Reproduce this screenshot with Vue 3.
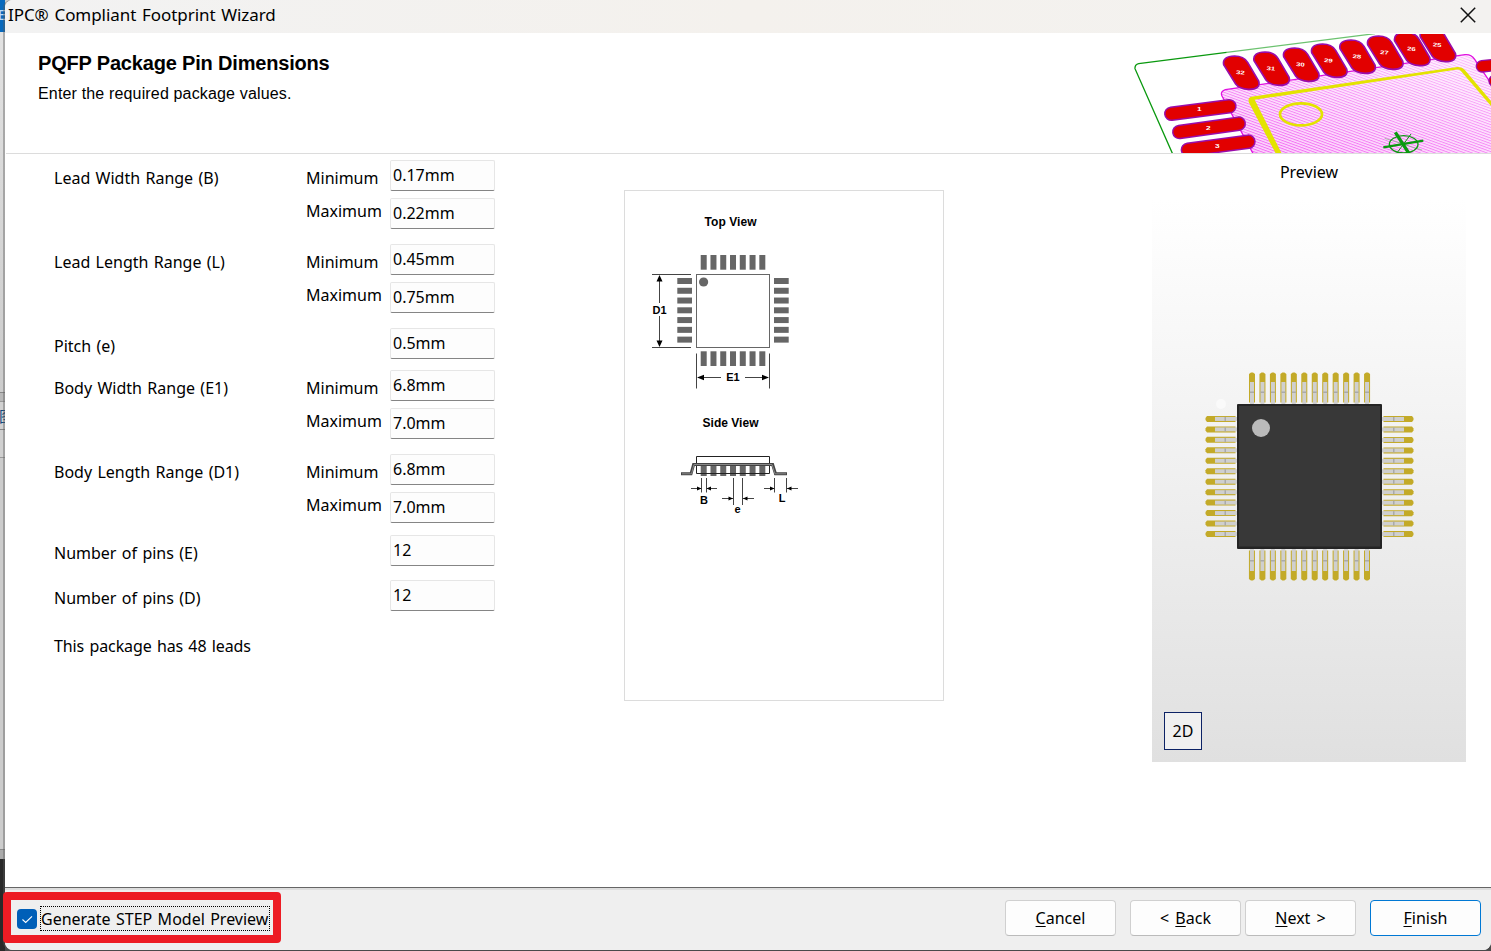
<script setup>
const groups = [
  { id: 'b', label: 'Lead Width Range (B)', cls: 'range', fields: [['Minimum', '0.17mm'], ['Maximum', '0.22mm']] },
  { id: 'l', label: 'Lead Length Range (L)', cls: 'range', fields: [['Minimum', '0.45mm'], ['Maximum', '0.75mm']] },
  { id: 'e', label: 'Pitch (e)', cls: 'single', fields: [['', '0.5mm']] },
  { id: 'e1', label: 'Body Width Range (E1)', cls: 'range', fields: [['Minimum', '6.8mm'], ['Maximum', '7.0mm']] },
  { id: 'd1', label: 'Body Length Range (D1)', cls: 'range last', fields: [['Minimum', '6.8mm'], ['Maximum', '7.0mm']] },
  { id: 'ne', label: 'Number of pins (E)', cls: 'count', fields: [['', '12']] },
  { id: 'nd', label: 'Number of pins (D)', cls: 'count', fields: [['', '12']] },
]

// Banner pads, drawn in a space three times finer than the banner itself
const topPads = [
  [0, 0, 32], [91, -12, 31], [180, -24, 30], [264, -36, 29],
  [349, -48, 28], [432, -60, 27], [513, -71, 26], [590, -83, 25],
]
const leftPads = [
  { n: 1, x1: 154, y1: 341, x2: 328, y2: 319, tx: 238, ty: 334 },
  { n: 2, x1: 178, y1: 396, x2: 356, y2: 371, tx: 265, ty: 389 },
  { n: 3, x1: 204, y1: 449, x2: 385, y2: 425, tx: 292, ty: 445 },
]
const seven = [0, 1, 2, 3, 4, 5, 6]
const pins = Array.from({ length: 12 }, (_, i) => 1252 + i * 10.46)
const sides = [0, 90, 180, 270]
</script>

<template>
  <div class="screen">
    <div class="behind">
      <div class="b-title">E</div>
      <div class="b-pane"></div>
      <div class="b-row"></div>
      <div class="b-icon">图</div>
      <div class="b-row tab"></div>
      <div class="b-pane2"></div>
      <div class="b-status"></div>
      <div class="b-dark"></div>
    </div>

    <div class="window">
      <header class="titlebar">
        <span class="t-title">IPC® Compliant Footprint Wizard</span>
        <svg class="close" width="16" height="16" viewBox="0 0 16 16"><path d="M.8.8 15.2 15.2M15.2.8.8 15.2" stroke="#111" stroke-width="1.5" fill="none" /></svg>
      </header>

      <section class="banner">
        <div class="heading">
          <h1>PQFP Package Pin Dimensions</h1>
          <p>Enter the required package values.</p>
        </div>
        <svg class="art" width="371" height="119" viewBox="0 102 1113 357">
          <defs>
            <linearGradient id="tint" x1="0" y1="1" x2=".6" y2="0">
              <stop offset="0" stop-color="#fcd4fc" /><stop offset="1" stop-color="#fff0ff" />
            </linearGradient>
            <linearGradient id="fade" x1="0" y1="1" x2=".7" y2="0">
              <stop offset="0" stop-color="#ccc" /><stop offset="1" stop-color="#444" />
            </linearGradient>
            <pattern id="hatch" width="40" height="7.6" patternUnits="userSpaceOnUse" patternTransform="rotate(20)">
              <rect width="40" height="3" fill="#ee3cee" />
            </pattern>
            <mask id="fademask"><rect y="100" width="1113" height="360" fill="url(#fade)" /></mask>
          </defs>
          <path d="M158 462 45 206Q44 194 56 191L320 157" fill="none" stroke="#0a990f" stroke-width="4" />
          <path d="M320 157 765 101" fill="none" stroke="#0a990f" stroke-width="4" opacity=".6" />
          <path d="M400 462 306 288Q300 274 316 269L1035 164Q1053 162 1064 178L1113 250V462Z" fill="url(#tint)" />
          <g mask="url(#fademask)"><path d="M400 462 306 288Q300 274 316 269L1035 164Q1053 162 1064 178L1113 250V462Z" fill="url(#hatch)" /></g>
          <path d="M400 462 306 288Q300 274 316 269L1035 164Q1053 162 1064 178L1113 250" fill="none" stroke="#e010e0" stroke-width="4" />
          <path d="M393 290 1012 201Q1026 200 1034 209L1113 303V318L1022 212Q1017 207 1007 209L404 299 486 462H468L387 308Q382 293 393 290Z" fill="#e3e300" />
          <ellipse cx="543" cy="343" rx="63" ry="33" fill="none" stroke="#e3e300" stroke-width="8" />
          <g fill="none" stroke="#0a990f">
            <ellipse cx="851" cy="433" rx="43" ry="26" stroke-width="4" />
            <path d="M826 397 868 462" stroke-width="10" /><path d="M790 442 910 422" stroke-width="7" />
            <path d="M873 402 830 460" stroke-width="3" /><path d="M794 415 906 450" stroke-width="3" opacity=".35" />
          </g>
          <g v-for="p in topPads" :key="p[2]" :transform="`translate(${p[0]} ${p[1]})`">
            <path d="M311 194Q306 169 344 168Q371 168 383 187L416 243Q423 268 386 268Q358 267 347 252Z" fill="#e20000" stroke="#9a0caa" stroke-width="5" />
            <text class="padno" transform="translate(361 223) rotate(5) scale(1.22 .85)">{{ p[2] }}</text>
          </g>
          <g v-for="p in leftPads" :key="p.n">
            <path :d="`M${p.x1} ${p.y1}L${p.x2} ${p.y2}`" stroke="#9a0caa" stroke-width="44" stroke-linecap="round" />
            <path :d="`M${p.x1} ${p.y1}L${p.x2} ${p.y2}`" stroke="#e20000" stroke-width="35" stroke-linecap="round" />
            <text class="padno" :transform="`translate(${p.tx} ${p.ty}) scale(1.3 .85)`">{{ p.n }}</text>
          </g>
          <g stroke-linecap="round">
            <path d="M1086 199 1150 192M1124 243 1150 240" stroke="#9a0caa" stroke-width="38" />
            <path d="M1086 199 1150 192M1124 243 1150 240" stroke="#e20000" stroke-width="30" />
          </g>
        </svg>
      </section>

      <main class="content">
        <div class="form">
          <div v-for="g in groups" :key="g.id" class="group" :class="g.cls">
            <label class="name">{{ g.label }}</label>
            <div class="captions"><span v-for="f in g.fields" :key="f[0]">{{ f[0] }}</span></div>
            <div class="inputs"><div v-for="f in g.fields" :key="f[0]" class="input">{{ f[1] }}</div></div>
          </div>
          <p class="summary">This package has 48 leads</p>
        </div>

        <div class="drawing">
          <svg width="318" height="509" viewBox="625 191 318 509">
            <g class="dim" text-anchor="middle">
              <text x="730.5" y="226" textLength="52">Top View</text>
              <text x="730.5" y="427" textLength="56">Side View</text>
              <text x="659.5" y="314" class="sm">D1</text>
              <text x="733" y="381" class="sm">E1</text>
              <text x="704" y="504" class="sm">B</text>
              <text x="782" y="502" class="sm">L</text>
              <text x="737.5" y="513" class="sm">e</text>
            </g>
            <rect x="696.5" y="274.5" width="73" height="73" fill="none" stroke="#666" />
            <circle cx="703.6" cy="282" r="4.6" fill="#666" />
            <g fill="#666">
              <template v-for="i in seven" :key="i">
                <rect :x="700.7 + i * 9.77" y="255" width="6" height="14.7" />
                <rect :x="700.7 + i * 9.77" y="351.3" width="6" height="14.7" />
                <rect x="677.3" :y="278 + i * 9.77" width="14.7" height="6" />
                <rect x="774" :y="278 + i * 9.77" width="14.7" height="6" />
                <rect :x="700.7 + i * 9.77" y="465" width="6" height="11" />
              </template>
            </g>
            <g fill="none" stroke="#444">
              <path d="M652 274.5H691M652 347.5H691M659.5 279V303M659.5 316V343M696.5 353.5V388.5M769.5 353.5V388.5M700 377.5H721M745 377.5H766" />
              <path d="M696.5 463V456.5H769.5V463M696.5 466V473.5H769.5V466" stroke="#222" />
              <path d="M681 473.8H691L693.6 464.5H772.6L775.5 473.8H787" stroke="#444" stroke-width="3" />
              <path d="M682 473.8H691.5L694 464.5H772L775 473.8H786" stroke="#888" stroke-width="1" />
              <path d="M701.5 478V492.5M706.5 478V492.5M733.5 478V505M742.5 478V505M774.5 478V492.5M786.5 478V492.5M691 488.5H701M707 488.5H717M722 498.5H733M743 498.5H754M764 488.5H774M787 488.5H798" />
            </g>
            <path d="M659.5 275 656.5 281.5H662.5ZM659.5 347 656.5 340.5H662.5ZM697 377.5 704 374.8V380.2ZM769 377.5 762 374.8V380.2ZM701.5 488.5 697 486.5V490.5ZM706.5 488.5 711 486.5V490.5ZM733 498.5 728.5 496.5V500.5ZM743 498.5 747.5 496.5V500.5ZM774.5 488.5 770 486.5V490.5ZM787 488.5 791.5 486.5V490.5Z" fill="#000" />
          </svg>
        </div>

        <div class="preview">
          <h2>Preview</h2>
          <div class="viewport">
            <svg width="314" height="562" viewBox="1152 200 314 562">
              <circle cx="1221" cy="404" r="5" fill="#fafafa" />
              <g v-for="a in sides" :key="a" :transform="`rotate(${a} 1309.5 476.5)`">
                <g v-for="(x, i) in pins" :key="i">
                  <path :d="`M${x - 3} 402.5V374L${x - 1} 372.5H${x + 1}L${x + 3} 374V402.5Z`" fill="#c3aa28" />
                  <rect :x="x - 2" y="382" width="4" height="23" fill="#cfcfcf" />
                  <rect :x="x - 2" y="391.5" width="4" height="1.5" fill="#aaa" />
                </g>
              </g>
              <rect x="1237" y="404" width="145" height="145" rx="1" fill="#242424" />
              <rect x="1239" y="406" width="141" height="140.5" fill="#383838" />
              <circle cx="1261" cy="428" r="9" fill="#bababa" />
            </svg>
            <button class="mode">2D</button>
          </div>
        </div>
      </main>

      <footer class="footer">
        <div class="option">
          <span class="check"><svg width="20" height="20" viewBox="0 0 20 20"><path d="M5.5 10.5 8.7 13.5 15 7.3" fill="none" stroke="#fff" stroke-width="1.1" /></svg></span>
          <span class="opt-label">Generate STEP Model Preview</span>
        </div>
        <div class="buttons">
          <button class="cancel"><u>C</u>ancel</button>
          <button>&lt; <u>B</u>ack</button>
          <button class="next"><u>N</u>ext &gt;</button>
          <button class="finish"><u>F</u>inish</button>
        </div>
      </footer>
    </div>
  </div>
</template>

<style>
html, body { margin: 0; overflow: hidden; background: #555; }
</style>

<style scoped>
.screen { display: flex; width: 1491px; height: 951px; overflow: hidden; font-family: "Noto Sans", "Open Sans", sans-serif; font-size: 16px; color: #000; word-spacing: 1.2px; background: linear-gradient(#ccc 0 858px, #4a4a4a 858px); }
.screen *, .screen { box-sizing: border-box; }
.behind { width: 5px; flex: none; display: flex; flex-direction: column; background: #dcdcdc; overflow: hidden; }
.b-title { height: 32px; flex: none; background: #0869bd; color: #b9dcf8; font-size: 14px; line-height: 29px; text-indent: -2px; overflow: hidden; }
.b-pane { height: 360px; flex: none; background: linear-gradient(#e2e2e2, #ccc); }
.b-row { height: 10px; flex: none; background: #b8b8b8; border-top: 1px solid #888; border-bottom: 1px solid #999; }
.b-icon { height: 27px; flex: none; color: #124a80; background: #d1d1d1; font: 15px/27px "Noto Sans CJK SC", sans-serif; text-indent: -1px; overflow: hidden; }
.b-row.tab { height: 29px; background: #d0d0d0; }
.b-pane2 { height: 391px; flex: none; background: #ccc; }
.b-status { height: 10px; flex: none; background: #aaa; border-top: 1px solid #888; }
.b-dark { flex: 1; background: #292929; }
.window { position: relative; width: 1486px; height: 950px; flex: none; display: flex; flex-direction: column; background: #fff; border-radius: 8px 0 8px 8px; padding-left: 1px; box-shadow: -2px 0 0 rgba(90, 90, 90, .4); }
.titlebar { height: 33px; flex: none; margin-left: -1px; padding: 0 15px 4px 3px; display: flex; align-items: center; justify-content: space-between; background: linear-gradient(90deg, #f2f2f2, #f4f1ed 50%, #f3f2f0); border-radius: 8px 0 0 0; }
.t-title { font-size: 17px; line-height: 24px; letter-spacing: -0.06px; word-spacing: 1.4px; white-space: nowrap; }
.close { display: block; }
.banner { height: 121px; flex: none; display: flex; justify-content: space-between; border-bottom: 1px solid #dcdcdc; padding: 1px 0 0 32px; font-family: "Liberation Sans", Arial, sans-serif; word-spacing: 0; }
.heading h1 { margin: 17px 0 0; font-size: 20px; line-height: 24px; font-weight: 700; letter-spacing: -0.18px; white-space: nowrap; }
.heading p { margin: 9px 0 0; font-size: 16px; line-height: 20px; letter-spacing: .16px; }
.art { display: block; flex: none; }
.padno { font: 700 19px "Liberation Sans", Arial, sans-serif; fill: #fff; text-anchor: middle; }
.content { flex: 1; display: flex; align-items: flex-start; min-height: 0; }
.form { width: 441px; margin-left: 48px; padding-top: 6px; flex: none; }
.group { display: grid; grid-template-columns: 252px 84px 105px; white-space: nowrap; }
.group.range { height: 84px; }
.group.single { height: 42px; }
.group.last { height: 81px; }
.group.count { height: 45px; }
.name { padding-top: 6px; line-height: 24px; }
.captions { padding-top: 6px; display: flex; flex-direction: column; gap: 9px; line-height: 24px; }
.inputs { display: flex; flex-direction: column; gap: 7px; }
.input { height: 31px; flex: none; padding-left: 2px; line-height: 29px; background: #fdfdfd; border: 1px solid #e6e6e6; border-bottom-color: #858585; border-radius: 2px; }
.summary { margin: 9px 0 0; line-height: 24px; letter-spacing: -0.1px; }
.drawing { width: 320px; height: 511px; flex: none; margin: 36px 0 0 129px; border: 1px solid #dcdcdc; word-spacing: 0; }
.drawing svg { display: block; }
.dim { font: 700 12px "Liberation Sans", Arial, sans-serif; fill: #000; }
.sm { font-size: 11px; }
.preview { width: 314px; flex: none; margin-left: 208px; }
.preview h2 { margin: 0; height: 46px; padding-top: 6px; font-size: 16px; line-height: 24px; font-weight: 400; text-align: center; }
.viewport { height: 562px; position: relative; background: linear-gradient(#fff, #e0e0e0); }
.viewport svg { display: block; }
.mode { position: absolute; left: 12px; bottom: 12px; width: 38px; height: 38px; padding: 0; background: #f0f0f0; border: 1px solid #0c2265; font: inherit; color: #000; }
.footer { height: 63px; flex: none; display: flex; justify-content: space-between; align-items: flex-start; background: #efefef; border-top: 1px solid #666; box-shadow: inset 0 2px 0 #ddd; margin-left: -1px; padding: 4px 10px 0 0; border-radius: 0 0 8px 8px; }
.option { width: 278px; height: 51px; display: flex; align-items: center; padding: 2px 0 0 6px; border: 8px solid #ed1c24; border-radius: 4px; margin-left: -2px; }
.check { width: 20px; height: 20px; flex: none; border-radius: 4px; background: #005fb8; }
.check svg { display: block; }
.opt-label { margin-left: 3px; width: 230px; height: 25px; flex: none; line-height: 24px; border: 1px dotted #000; white-space: nowrap; }
.buttons { display: flex; padding-top: 8px; }
.buttons button { width: 111px; height: 36px; padding: 0; font: inherit; color: #000; word-spacing: 2px; background: #fdfdfd; border: 1px solid #d0d0d0; border-bottom-color: #bbb; border-radius: 4px; }
.buttons .cancel { margin-right: 14px; }
.buttons .next { margin: 0 14px 0 4px; }
.buttons .finish { border-color: #0078d4; }
.buttons u { text-underline-offset: 2px; }
</style>
